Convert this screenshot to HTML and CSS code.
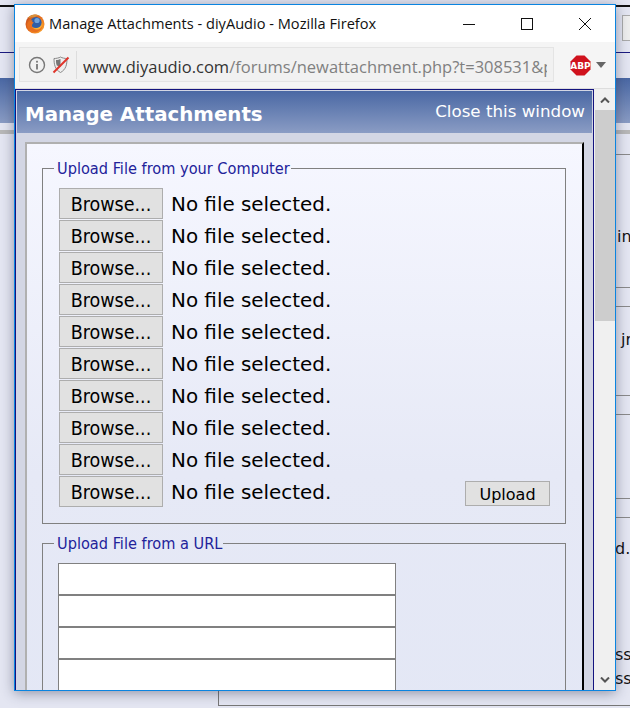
FILE: index.html
```html
<!DOCTYPE html>
<html lang="en">
<head>
<meta charset="utf-8">
<title>Manage Attachments - diyAudio</title>
<link rel="stylesheet" href="styles.css">
</head>
<body>
<div class="desktop">
  <div class="bg bg-black"></div>
  <div class="bg bg-navy"></div>
  <div class="bg bg-blue"></div>
  <div class="bg bg-grey"></div>
  <div class="bg-rule r1"></div>
  <div class="bg-rule r2"></div>
  <div class="bg-rule r3"></div>
  <div class="bg-rule r4"></div>
  <div class="bg-rule r5"></div>
  <div class="bg-rule r6"></div>
  <div class="bg-rule r7"></div>
  <div class="bg-box"></div>
  <div class="bg-frame"></div>
  <span class="bg-text t1">in</span>
  <span class="bg-text t2">jr</span>
  <span class="bg-text t3">d.</span>
  <span class="bg-text t4">ss</span>
  <span class="bg-text t5">ss</span>

  <div class="window">
    <div class="titlebar">
      <svg class="ff" width="20" height="20" viewBox="0 0 20 20">
        <defs>
          <radialGradient id="ffg" cx="0.65" cy="0.65" r="0.8">
            <stop offset="0" stop-color="#ffc23a"/>
            <stop offset="0.55" stop-color="#ef7a1e"/>
            <stop offset="1" stop-color="#b9401c"/>
          </radialGradient>
        </defs>
        <circle cx="10" cy="10" r="9.5" fill="url(#ffg)"/>
        <circle cx="11" cy="8.5" r="5.6" fill="#2f5fa8"/>
        <circle cx="12" cy="6.5" r="2.6" fill="#6fa3dc"/>
        <path d="M2 11c1 5 6 8 10 7 3-1 5-3 6-7-1 3-4 5-7 4.500-3-.5-4-2-4-4 0-1.500 1-2.500 2-3-2 0-2-1-1.500-2.500C5 6.500 2.500 8 2 11z" fill="#e8701f"/>
        <path d="M3 4c1-2 4-3.500 7-3.500 2 0 4 .5 5 1.500-2-.5-4 0-5 1-2 0-4 .5-7 1z" fill="#d9913a"/>
      </svg>
      <span class="wintitle">Manage Attachments - diyAudio - Mozilla Firefox</span>
      <div class="controls">
        <svg class="ctl" width="14" height="14" viewBox="0 0 14 14"><path d="M1 7.500h12" stroke="#111" fill="none"/></svg>
        <svg class="ctl" width="14" height="14" viewBox="0 0 14 14"><rect x="1.500" y="1.500" width="11" height="11" stroke="#111" fill="none"/></svg>
        <svg class="ctl" width="14" height="14" viewBox="0 0 14 14"><path d="M1 1l12 12M13 1L1 13" stroke="#111" fill="none"/></svg>
      </div>
    </div>
    <div class="toolbar">
      <div class="urlbar">
        <svg class="info" width="18" height="18" viewBox="0 0 18 18">
          <circle cx="9" cy="9" r="7.500" fill="none" stroke="#777" stroke-width="1.400"/>
          <rect x="8.100" y="8" width="1.800" height="5.500" fill="#777"/>
          <rect x="8.100" y="4.800" width="1.800" height="1.800" fill="#777"/>
        </svg>
        <svg class="shield" width="18" height="18" viewBox="0 0 18 18">
          <path d="M2 2.500c2 0 5-.5 6.500-1.500C10 2 13 2.500 15 2.500c0 6-1 11-6.500 14C3 13.500 2 8.500 2 2.500z" fill="#eee" stroke="#888"/>
          <path d="M4 4c2 0 3.500-.5 4.500-1v8L4.800 9.500C4 7.500 4 6 4 4z" fill="#777"/>
          <path d="M1.500 16.500L16.500 1.500" stroke="#e0352b" stroke-width="2"/>
        </svg>
        <div class="sep"></div>
        <div class="url"><span class="domain">www.diyaudio.com</span>/forums/newattachment.php?t=308531&amp;p</div>
      </div>
      <div class="abp">
        <svg width="21" height="21" viewBox="0 0 21 21">
          <polygon points="6.500,0.500 14.500,0.500 20.500,6.500 20.500,14.500 14.500,20.500 6.500,20.500 0.500,14.500 0.500,6.500" fill="#d0121d"/>
          <text x="10.500" y="13.500" text-anchor="middle" class="abp-text">ABP</text>
        </svg>
        <svg width="10" height="6" viewBox="0 0 10 6"><polygon points="0,0 10,0 5,6" fill="#666"/></svg>
      </div>
    </div>
    <div class="viewport">
      <div class="page">
        <div class="header">
          <div class="h-title">Manage Attachments</div>
          <div class="h-close">Close this window</div>
        </div>
        <div class="panel">
          <div class="box">
            <fieldset class="fs fs-file">
              <legend>Upload File from your Computer</legend>
              <div class="rows">
                <div class="row"><button class="browse" type="button">Browse...</button><span class="nofile">No file selected.</span></div>
                <div class="row"><button class="browse" type="button">Browse...</button><span class="nofile">No file selected.</span></div>
                <div class="row"><button class="browse" type="button">Browse...</button><span class="nofile">No file selected.</span></div>
                <div class="row"><button class="browse" type="button">Browse...</button><span class="nofile">No file selected.</span></div>
                <div class="row"><button class="browse" type="button">Browse...</button><span class="nofile">No file selected.</span></div>
                <div class="row"><button class="browse" type="button">Browse...</button><span class="nofile">No file selected.</span></div>
                <div class="row"><button class="browse" type="button">Browse...</button><span class="nofile">No file selected.</span></div>
                <div class="row"><button class="browse" type="button">Browse...</button><span class="nofile">No file selected.</span></div>
                <div class="row"><button class="browse" type="button">Browse...</button><span class="nofile">No file selected.</span></div>
                <div class="row last"><button class="browse" type="button">Browse...</button><span class="nofile">No file selected.</span><button class="upload" type="button">Upload</button></div>
              </div>
            </fieldset>
            <fieldset class="fs fs-url">
              <legend>Upload File from a URL</legend>
              <div class="urlinputs">
                <div class="urlinput"></div>
                <div class="urlinput"></div>
                <div class="urlinput"></div>
                <div class="urlinput"></div>
              </div>
            </fieldset>
          </div>
        </div>
      </div>
      <div class="scrollbar">
        <svg class="arrow" width="10" height="6" viewBox="0 0 10 6"><path d="M1 5.500l4-4 4 4" fill="none" stroke="#555" stroke-width="2"/></svg>
        <div class="thumb"></div>
        <div class="track"></div>
        <svg class="arrow" width="10" height="6" viewBox="0 0 10 6"><path d="M1 .5l4 4 4-4" fill="none" stroke="#555" stroke-width="2"/></svg>
      </div>
    </div>
  </div>
</div>
</body>
</html>
```

FILE: styles.css
```css
* { box-sizing: border-box; }
html, body { margin: 0; padding: 0; }
body { width: 630px; height: 708px; overflow: hidden; background: #e4e6f2; font-family: "DejaVu Sans", sans-serif; }
.desktop { position: relative; width: 630px; height: 708px; overflow: hidden; }

.bg { position: absolute; left: 0; width: 630px; }
.bg-black { top: 5px; height: 2px; background: #111; }
.bg-navy { top: 52px; height: 1px; background: #1a1a80; }
.bg-blue { top: 78px; height: 45px; background: linear-gradient(#4a68a4, #8a9cc4); }
.bg-grey { top: 130px; height: 4px; background: #b8b8b8; }
.bg-rule { position: absolute; left: 616px; width: 14px; height: 1px; background: #8a8a8a; }
.r1 { top: 154px; }
.r2 { top: 287px; }
.r3 { top: 306px; }
.r4 { top: 395px; }
.r5 { top: 414px; }
.r6 { top: 498px; }
.r7 { top: 517px; }
.bg-box { position: absolute; left: 622px; top: 15px; width: 12px; height: 26px; border: 1px solid #aaa; background: #eee; }
.bg-frame { position: absolute; left: 218px; top: 640px; width: 420px; height: 66px; border-left: 1px solid #777; border-bottom: 1px solid #777; }
.bg-text { position: absolute; font-size: 16px; line-height: 20px; color: #111; }
.t1 { left: 617px; top: 227px; }
.t2 { left: 621px; top: 330px; }
.t3 { left: 615px; top: 539px; }
.t4 { left: 615px; top: 645px; }
.t5 { left: 615px; top: 669px; }

.window { position: absolute; left: 14px; top: 4px; width: 602px; height: 687px; border: 1px solid #0a84e0; background: #fff; box-shadow: 0 2px 12px rgba(40, 44, 70, 0.45); display: flex; flex-direction: column; overflow: hidden; }

.titlebar { height: 37px; flex: none; display: flex; align-items: center; padding-left: 10px; background: #fff; }
.ff { flex: none; margin-right: 4px; }
.wintitle { font-family: "Open Sans", sans-serif; font-size: 14.6px; color: #111; white-space: nowrap; flex: 1; padding-bottom: 2px; }
.controls { display: flex; align-items: center; gap: 44px; padding-right: 23px; }
.ctl { display: block; }

.toolbar { height: 47px; flex: none; background: #f5f5f5; border-bottom: 1px solid #ddd; display: flex; align-items: center; padding: 0 10px 0 4px; }
.urlbar { width: 535px; height: 35px; margin-top: -1px; background: #f1f1f1; border: 1px solid #e4e4e4; display: flex; align-items: center; padding-left: 9px; overflow: hidden; flex: none; }
.info { flex: none; margin-left: -1px; }
.shield { flex: none; margin-left: 6px; }
.sep { width: 1px; height: 28px; background: #ddd; margin: 0 6px; flex: none; }
.url { font-family: "Open Sans", sans-serif; font-size: 16.5px; color: #808080; white-space: nowrap; overflow: hidden; width: 464px; padding-top: 4px; }
.domain { color: #333; }
.abp { display: flex; align-items: center; gap: 5px; margin-left: 16px; }
.abp svg { display: block; flex: none; }
.abp-text { font-family: "DejaVu Sans", sans-serif; font-size: 9px; font-weight: 700; fill: #fff; }

.viewport { flex: 1; min-height: 0; display: flex; overflow: hidden; }
.page { flex: 1; min-width: 0; background: #d3d6e4; border: 1px solid #14147f; border-bottom: 0; padding: 1px 1px 0 1px; overflow: hidden; }
.header { height: 42px; background: linear-gradient(#4a68a4, #8a9cc4); display: flex; justify-content: space-between; padding: 0 7px 0 8px; color: #fff; }
.h-title { font-size: 19.8px; font-weight: 700; padding-top: 12px; line-height: 24px; }
.h-close { font-size: 16.7px; padding-top: 10px; line-height: 20px; }

.panel { height: 560px; padding: 9px 0 0 8px; }
.box { width: 559px; height: 600px; border-top: 2px solid #b0b0b0; border-left: 2px solid #b0b0b0; border-right: 2px solid #000; padding: 12px 16px 0 15px; background: linear-gradient(#f6f7ff, #e6e9f6 55%, #e3e7f5); }
.fs { margin: 0; padding: 0; border: 1px solid #808080; background: transparent; min-width: 0; }
.fs legend { margin-left: -5px; padding: 2px 1px 0 3px; font-family: "DejaVu Sans Condensed", "DejaVu Sans", sans-serif; font-size: 16.2px; line-height: 22px; color: #22229a; }
.fs-file { height: 368px; padding: 7px 16px 0 16px; }
.fs-url { height: 300px; margin-top: 7px; padding: 8px 0 0 15px; }
.fs-url legend { margin-left: -4px; }
.rows { display: flex; flex-direction: column; }
.row { display: flex; align-items: center; height: 32px; }
.browse { width: 104px; height: 31px; padding: 2px 0 0; background: #e1e1e1; border: 1px solid #adadad; border-radius: 0; font-family: "DejaVu Sans Condensed", "DejaVu Sans", sans-serif; font-size: 19.500px; color: #000; }
.nofile { margin-left: 8px; padding-top: 2px; font-size: 19.9px; color: #000; white-space: nowrap; }
.upload { margin-left: auto; margin-right: -1px; width: 85px; height: 25px; padding: 2px 0 0; background: #e1e1e1; border: 1px solid #adadad; border-radius: 0; font-family: "DejaVu Sans", sans-serif; font-size: 16px; color: #000; position: relative; top: 2px; }
.urlinputs { display: flex; flex-direction: column; width: 338px; }
.urlinput { height: 32px; background: #fff; border: 1px solid #808080; }

.scrollbar { width: 21px; flex: none; background: #f0f0f0; display: flex; flex-direction: column; align-items: center; padding-left: 1px; }
.arrow { display: block; flex: none; margin: 7.500px 0; }
.thumb { width: 100%; height: 211px; background: #cdcdcd; flex: none; }
.track { flex: 1; }
```
